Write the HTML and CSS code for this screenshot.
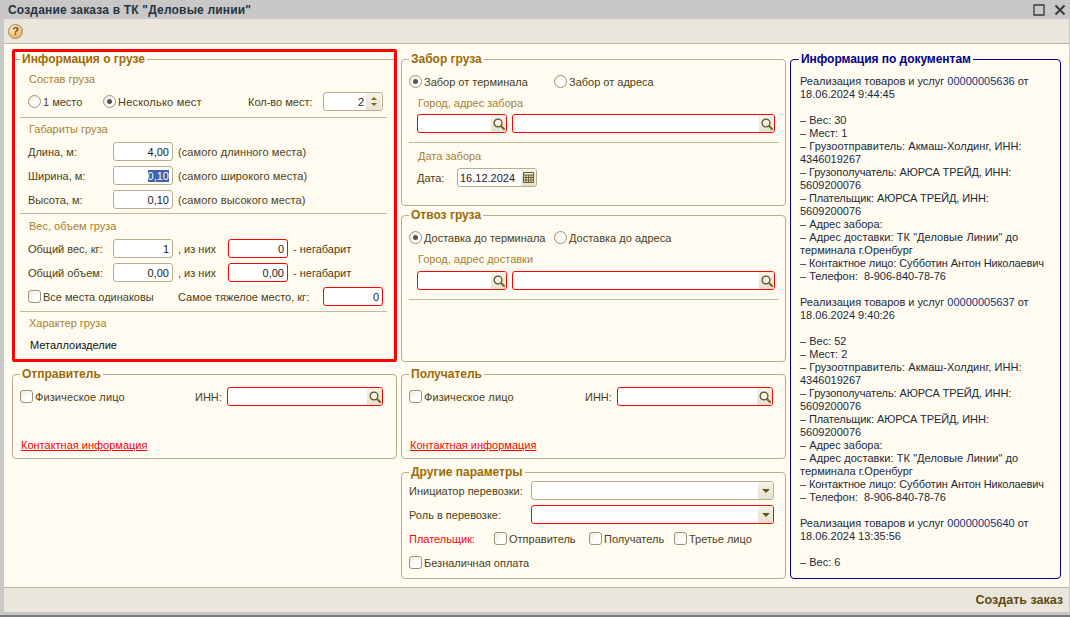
FILE: index.html
```html
<!DOCTYPE html>
<html lang="ru">
<head>
	<meta charset="UTF-8">
	<title>Создание заказа</title>
	<link rel="stylesheet" href="styles.css">
</head>
<body>
	<svg class="defs" width="0" height="0">
		<symbol id="i-search" viewBox="0 0 14 14">
			<circle cx="6" cy="6" r="3.900" fill="#f7f4e6" stroke="#5f5228" stroke-width="1.300"/>
			<path d="M9 9L12 12" stroke="#7a6422" stroke-width="2" stroke-linecap="round"/>
		</symbol>
		<symbol id="i-cal" viewBox="0 0 13 13">
			<path d="M1.500 1.500h10v10h-10zM1.500 4h10M1.500 6.500h10M1.500 9h10M4 4v7.500M6.500 4v7.500M9 4v7.500" fill="none" stroke="#6b5a2a" stroke-width="1"/>
		</symbol>
	</svg>
	<div class="window">
		<div class="titlebar">
			<span class="title">Создание заказа в ТК "Деловые линии"</span>
			<svg class="win-btn" width="12" height="12" viewBox="0 0 12 12"><path d="M1 1h10v10H1z" fill="none" stroke="#3a3a3a" stroke-width="1.300"/></svg>
			<svg class="win-btn" width="12" height="12" viewBox="0 0 12 12"><path d="M1.500 1.500l9 9M10.500 1.500l-9 9" fill="none" stroke="#3a3a3a" stroke-width="2"/></svg>
		</div>
		<div class="toolbar"><span class="help">?</span></div>

		<div class="main">
			<div class="col col-left">
				<div class="highlight">
					<fieldset class="group group-inner">
						<legend>Информация о грузе</legend>
						<div class="caption cap-first">Состав груза</div>
						<div class="row row-places">
							<label class="opt opt-one"><i class="radio"></i>1 место</label>
							<label class="opt opt-many"><i class="radio on"></i>Несколько мест</label>
							<span class="lbl-count">Кол-во мест:</span>
							<div class="field num"><span class="val">2</span><span class="spin"><i class="up"></i><i class="down"></i></span></div>
						</div>
						<div class="line line-a"></div>
						<div class="caption cap-b">Габариты груза</div>
						<div class="row row-size first">
							<span class="lbl-size">Длина, м:</span>
							<div class="field num"><span class="val">4,00</span></div>
							<span class="note dim">(самого длинного места)</span>
						</div>
						<div class="row row-size">
							<span class="lbl-size">Ширина, м:</span>
							<div class="field num"><span class="val selected">0,10</span></div>
							<span class="note dim">(самого широкого места)</span>
						</div>
						<div class="row row-size">
							<span class="lbl-size">Высота, м:</span>
							<div class="field num"><span class="val">0,10</span></div>
							<span class="note dim">(самого высокого места)</span>
						</div>
						<div class="line line-b"></div>
						<div class="caption cap-c">Вес, объем груза</div>
						<div class="row row-size first">
							<span class="lbl-size">Общий вес, кг:</span>
							<div class="field num"><span class="val">1</span></div>
							<span class="note of">, из них</span>
							<div class="field num req"><span class="val">0</span></div>
							<span class="note">- негабарит</span>
						</div>
						<div class="row row-size">
							<span class="lbl-size">Общий объем:</span>
							<div class="field num"><span class="val">0,00</span></div>
							<span class="note of">, из них</span>
							<div class="field num req"><span class="val">0,00</span></div>
							<span class="note">- негабарит</span>
						</div>
						<div class="row row-size">
							<label class="opt opt-same"><i class="check"></i>Все места одинаковы</label>
							<span class="lbl-heavy">Самое тяжелое место, кг:</span>
							<div class="field num req"><span class="val">0</span></div>
						</div>
						<div class="line line-c"></div>
						<div class="caption cap-d">Характер груза</div>
						<div class="cargo-kind">Металлоизделие</div>
					</fieldset>
				</div>
				<fieldset class="group party">
					<legend>Отправитель</legend>
					<div class="row party-row">
						<label class="opt opt-phys"><i class="check"></i>Физическое лицо</label>
						<span class="lbl-inn">ИНН:</span>
						<div class="field req inn"><span class="btn"><svg width="14" height="14"><use href="#i-search"/></svg></span></div>
					</div>
					<a class="contact">Контактная информация</a>
				</fieldset>
			</div>

			<div class="col col-mid">
				<fieldset class="group pickup">
					<legend>Забор груза</legend>
					<div class="row way-row">
						<label class="opt opt-way"><i class="radio on"></i>Забор от терминала</label>
						<label class="opt"><i class="radio"></i>Забор от адреса</label>
					</div>
					<div class="caption way-cap">Город, адрес забора</div>
					<div class="row addr-row">
						<div class="field req city"><span class="btn"><svg width="14" height="14"><use href="#i-search"/></svg></span></div>
						<div class="field req addr"><span class="btn"><svg width="14" height="14"><use href="#i-search"/></svg></span></div>
					</div>
					<div class="line way-line"></div>
					<div class="caption date-cap">Дата забора</div>
					<div class="row date-row">
						<span class="lbl-date">Дата:</span>
						<div class="field date"><span class="val">16.12.2024</span><span class="btn"><svg width="13" height="13"><use href="#i-cal"/></svg></span></div>
					</div>
				</fieldset>
				<fieldset class="group dropoff">
					<legend>Отвоз груза</legend>
					<div class="row way-row">
						<label class="opt opt-way"><i class="radio on"></i>Доставка до терминала</label>
						<label class="opt"><i class="radio"></i>Доставка до адреса</label>
					</div>
					<div class="caption way-cap">Город, адрес доставки</div>
					<div class="row addr-row second">
						<div class="field req city"><span class="btn"><svg width="14" height="14"><use href="#i-search"/></svg></span></div>
						<div class="field req addr"><span class="btn"><svg width="14" height="14"><use href="#i-search"/></svg></span></div>
					</div>
					<div class="line way-line"></div>
				</fieldset>
				<fieldset class="group party">
					<legend>Получатель</legend>
					<div class="row party-row">
						<label class="opt opt-phys"><i class="check"></i>Физическое лицо</label>
						<span class="lbl-inn">ИНН:</span>
						<div class="field req inn"><span class="btn"><svg width="14" height="14"><use href="#i-search"/></svg></span></div>
					</div>
					<a class="contact">Контактная информация</a>
				</fieldset>
				<fieldset class="group other">
					<legend>Другие параметры</legend>
					<div class="row other-row first">
						<span class="lbl-other">Инициатор перевозки:</span>
						<div class="field select"><span class="btn"><i class="down big"></i></span></div>
					</div>
					<div class="row other-row">
						<span class="lbl-other">Роль в перевозке:</span>
						<div class="field req select"><span class="btn"><i class="down big"></i></span></div>
					</div>
					<div class="row other-row">
						<span class="lbl-payer">Плательщик:</span>
						<label class="opt opt-payer"><i class="check"></i>Отправитель</label>
						<label class="opt opt-payer2"><i class="check"></i>Получатель</label>
						<label class="opt"><i class="check"></i>Третье лицо</label>
					</div>
					<div class="row other-row">
						<label class="opt"><i class="check"></i>Безналичная оплата</label>
					</div>
				</fieldset>
			</div>

			<div class="col col-right">
				<fieldset class="group docs">
					<legend>Информация по документам</legend>
					<div class="doc-text">
						<div><span>Реализация товаров и услуг </span><a>00000005636</a><span> от</span></div>
						<div>18.06.2024 9:44:45</div>
						<div class="gap"></div>
						<div>– Вес: 30</div>
						<div>– Мест: 1</div>
						<div class="wide">– Грузоотправитель: Акмаш-Холдинг, ИНН:</div>
						<div>4346019267</div>
						<div class="tight">– Грузополучатель: АЮРСА ТРЕЙД, ИНН:</div>
						<div>5609200076</div>
						<div class="tight">– Плательщик: АЮРСА ТРЕЙД, ИНН:</div>
						<div>5609200076</div>
						<div>– Адрес забора:</div>
						<div class="wide">– Адрес доставки: ТК "Деловые Линии" до</div>
						<div>терминала г.Оренбург</div>
						<div class="tight">– Контактное лицо: Субботин Антон Николаевич</div>
						<div>– Телефон:&nbsp; 8-906-840-78-76</div>
						<div class="gap"></div>
						<div><span>Реализация товаров и услуг </span><a>00000005637</a><span> от</span></div>
						<div>18.06.2024 9:40:26</div>
						<div class="gap"></div>
						<div>– Вес: 52</div>
						<div>– Мест: 2</div>
						<div class="wide">– Грузоотправитель: Акмаш-Холдинг, ИНН:</div>
						<div>4346019267</div>
						<div class="tight">– Грузополучатель: АЮРСА ТРЕЙД, ИНН:</div>
						<div>5609200076</div>
						<div class="tight">– Плательщик: АЮРСА ТРЕЙД, ИНН:</div>
						<div>5609200076</div>
						<div>– Адрес забора:</div>
						<div class="wide">– Адрес доставки: ТК "Деловые Линии" до</div>
						<div>терминала г.Оренбург</div>
						<div class="tight">– Контактное лицо: Субботин Антон Николаевич</div>
						<div>– Телефон:&nbsp; 8-906-840-78-76</div>
						<div class="gap"></div>
						<div><span>Реализация товаров и услуг </span><a>00000005640</a><span> от</span></div>
						<div>18.06.2024 13:35:56</div>
						<div class="gap"></div>
						<div>– Вес: 6</div>
					</div>
				</fieldset>
			</div>
		</div>

		<div class="footer"><a class="create">Создать заказ</a></div>
	</div>
</body>
</html>
```

FILE: styles.css
```css
html, body {
	margin: 0;
	padding: 0;
	height: 617px;
	overflow: hidden;
	background: #c8c8c8;
}
body {
	box-sizing: border-box;
	border-bottom: 2px solid #7a7a7a;
	font-family: "Liberation Sans", Arial, sans-serif;
	font-size: 11px;
	color: #4a3f20;
}
.defs {
	display: block;
	height: 0;
}
.window {
	display: flex;
	flex-direction: column;
	height: 612px;
	margin-left: 4px;
	margin-right: 1px;
	background: #fffbf0;
}

/* title + toolbar */
.titlebar {
	display: flex;
	align-items: center;
	gap: 9px;
	height: 19px;
	margin-left: -4px;
	margin-right: -1px;
	padding: 0 4px 0 8px;
	background: #c8c8c8;
}
.title {
	flex: 1;
	font-size: 12px;
	letter-spacing: .18px;
	font-weight: bold;
	color: #26343f;
}
.toolbar {
	display: flex;
	align-items: center;
	height: 24px;
	padding-left: 4px;
	background: #ebe6dc;
	border-bottom: 1px solid #bdb49c;
}
.help {
	width: 15px;
	height: 15px;
	border-radius: 50%;
	border: 1px solid #a88a50;
	box-sizing: border-box;
	background: radial-gradient(circle at 40% 30%, #fff3d8, #f0b060 75%);
	color: #6a4a10;
	font-size: 11px;
	font-weight: bold;
	line-height: 13px;
	text-align: center;
}

/* three columns */
.main {
	flex: 1;
	display: flex;
	gap: 4px;
	padding-left: 8px;
}
.col {
	display: flex;
	flex-direction: column;
}
.col-left, .col-mid {
	width: 385px;
}
.col-left {
	padding-top: 5px;
}
.col-mid {
	padding-top: 8px;
}
.col-right {
	width: 271px;
	padding-top: 8px;
}

/* groups */
.group {
	box-sizing: border-box;
	min-width: 0;
	margin: 0;
	padding: 0;
	border: 1px solid #b8ad8c;
	border-radius: 4px;
}
.group > legend {
	margin-left: 7px;
	padding: 0 2px;
	font-size: 12px;
	line-height: 14px;
	font-weight: bold;
	color: #9c6a08;
}
.highlight {
	box-sizing: border-box;
	height: 313px;
	border: 3px solid #f00;
	border-radius: 2px;
}
.group-inner {
	height: 100%;
	border-width: 1px 0 0 0;
	border-radius: 0;
}
.group-inner > legend {
	margin-left: 5px;
}
.pickup {
	height: 154px;
}
.dropoff {
	height: 154px;
	margin-top: 2px;
}
.party {
	height: 92px;
	margin-top: 5px;
}
.other {
	height: 114px;
	margin-top: 6px;
}
.docs {
	height: 527px;
	border-color: #00008b;
}
.docs > legend {
	margin-left: 8px;
	letter-spacing: -.04px;
	color: #00008b;
}

/* rows */
.row {
	display: flex;
	align-items: center;
	height: 19px;
	white-space: nowrap;
}
.caption {
	height: 14px;
	line-height: 14px;
	padding-left: 14px;
	color: #a8812f;
}
.line {
	height: 1px;
	margin: 0 7px 0 5px;
	background: #c4ba9a;
}
.opt {
	display: flex;
	align-items: center;
	gap: 2px;
}
.radio, .check {
	display: block;
	box-sizing: border-box;
	width: 13px;
	height: 13px;
	flex: none;
	position: relative;
	background: linear-gradient(135deg, #eeeadd, #fff 60%);
	border: 1px solid #9c9478;
}
.radio {
	border-radius: 50%;
}
.check {
	border-radius: 3px;
}
.radio.on::after {
	content: "";
	position: absolute;
	left: 3px;
	top: 3px;
	width: 5px;
	height: 5px;
	border-radius: 50%;
	background: #555;
}

/* inputs */
.field {
	display: flex;
	align-items: center;
	box-sizing: border-box;
	height: 19px;
	background: #fff;
	border: 1px solid #b8ad8c;
	border-radius: 3px;
	color: #222;
	flex: none;
}
.field.req {
	border-color: #f00;
}
.num {
	width: 60px;
	justify-content: flex-end;
	padding-right: 1px;
}
.val {
	padding: 0 2px;
}
.selected {
	padding: 0;
	margin-right: 2px;
	background: #3d62ad;
	color: #fff;
}
.btn {
	display: flex;
	align-items: center;
	justify-content: center;
	width: 15px;
	height: 100%;
	margin-left: auto;
	background: linear-gradient(#f6f3e8, #e6e1cf);
	border-radius: 0 2px 2px 0;
}
.spin {
	display: flex;
	flex-direction: column;
	align-items: center;
	justify-content: center;
	gap: 3px;
	width: 15px;
	height: 100%;
	background: linear-gradient(#f6f3e8, #e6e1cf);
	border-radius: 0 2px 2px 0;
}
.up, .down {
	display: block;
	width: 0;
	height: 0;
	border-left: 3px solid transparent;
	border-right: 3px solid transparent;
}
.up {
	border-bottom: 3px solid #7a6420;
}
.down {
	border-top: 3px solid #7a6420;
}
.down.big {
	border-left-width: 4px;
	border-right-width: 4px;
	border-top-width: 4px;
	border-top-color: #6b5518;
}

/* left column */
.cap-first {
	margin-top: 6px;
}
.row-places {
	margin: 6px 0 0 13px;
}
.opt-one {
	width: 75px;
}
.opt-many {
	width: 145px;
	letter-spacing: .2px;
}
.lbl-count {
	width: 75px;
}
.line-a {
	margin-top: 6px;
}
.cap-b {
	margin-top: 4px;
}
.row-size {
	margin: 5px 0 0 13px;
}
.row-size.first {
	margin-top: 6px;
}
.lbl-size {
	width: 85px;
}
.note {
	margin-left: 5px;
}
.note.dim {
	letter-spacing: .1px;
}
.note.of {
	width: 50px;
}
.opt-same {
	width: 150px;
}
.lbl-heavy {
	width: 145px;
}
.line-b {
	margin-top: 4px;
}
.cap-c {
	margin-top: 5px;
}
.line-c {
	margin-top: 5px;
}
.cap-d {
	margin-top: 4px;
}
.cargo-kind {
	margin: 8px 0 0 15px;
	line-height: 14px;
	color: #111;
}

/* sender / receiver */
.party-row {
	margin: 6px 0 0 7px;
}
.opt-phys {
	width: 175px;
	letter-spacing: .1px;
}
.col-mid .opt-phys {
	width: 176px;
}
.lbl-inn {
	width: 32px;
}
.inn {
	width: 156px;
}
.contact {
	display: block;
	margin: 32px 0 0 8px;
	color: #f00;
	text-decoration: underline;
	line-height: 14px;
}

/* pickup / delivery */
.way-row {
	margin: 6px 0 0 7px;
}
.opt-way {
	width: 145px;
}
.way-cap {
	margin: 5px 0 0 2px;
}
.addr-row {
	gap: 5px;
	margin: 4px 0 0 15px;
}
.addr-row.second {
	margin-top: 5px;
}
.city {
	width: 90px;
}
.addr {
	width: 263px;
}
.way-line {
	margin: 9px 6px 0 7px;
}
.date-cap {
	margin: 6px 0 0 2px;
}
.date-row {
	margin: 5px 0 0 15px;
}
.lbl-date {
	width: 40px;
}
.date {
	width: 80px;
}

/* other params */
.other-row {
	margin: 5px 0 0 7px;
}
.other-row.first {
	margin-top: 2px;
}
.lbl-other {
	width: 122px;
}
.select {
	width: 243px;
}
.lbl-payer {
	width: 85px;
	color: #f00;
}
.opt-payer {
	width: 95px;
}
.opt-payer2 {
	width: 85px;
}

/* documents */
.doc-text {
	margin: 9px 0 0 9px;
	line-height: 13px;
	white-space: nowrap;
	color: #1c2a3a;
}
.doc-text > div > span {
	white-space: pre;
}
.doc-text .gap {
	height: 13px;
}
.doc-text .tight {
	letter-spacing: -.1px;
}
.doc-text .wide {
	letter-spacing: .06px;
}
.doc-text a {
	color: #0b3278;
}

/* footer */
.footer {
	display: flex;
	align-items: center;
	justify-content: flex-end;
	height: 25px;
	padding-right: 6px;
	background: #ebe6dc;
	border-top: 1px solid #bdb49c;
	box-sizing: border-box;
}
.create {
	font-size: 12.5px;
	font-weight: bold;
	color: #5c4a14;
}
```
